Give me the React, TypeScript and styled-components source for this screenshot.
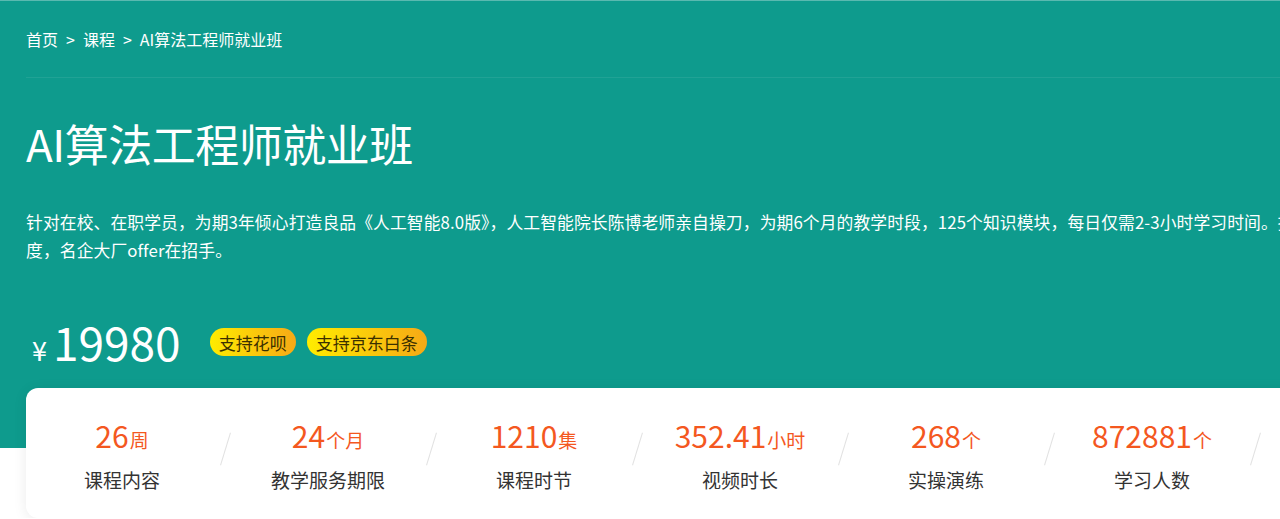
import React from 'react';
import styled, { createGlobalStyle } from 'styled-components';

const GlobalStyle = createGlobalStyle`
  html, body {
    margin: 0;
    padding: 0;
    overflow: hidden;
    background: #fff;
  }
  body {
    font-family: "Microsoft YaHei", "Noto Sans CJK SC", sans-serif;
  }
  * {
    box-sizing: border-box;
  }
`;

interface Stat {
  value: string;
  unit: string;
  label: string;
}

const stats: Stat[] = [
  { value: '26', unit: '周', label: '课程内容' },
  { value: '24', unit: '个月', label: '教学服务期限' },
  { value: '1210', unit: '集', label: '课程时节' },
  { value: '352.41', unit: '小时', label: '视频时长' },
  { value: '268', unit: '个', label: '实操演练' },
  { value: '872881', unit: '个', label: '学习人数' },
  { value: '98', unit: '%', label: '就业率' },
];

const Page = styled.div`
  width: 1480px;
`;

const Hero = styled.section`
  background: #0e9b8d;
  border-top: 1px solid #5ab9b0;
  padding: 0 0 81px 26px;
  color: #fff;
`;

const Breadcrumb = styled.nav`
  height: 77px;
  display: flex;
  align-items: center;
  font-size: 16px;
  border-bottom: 1px solid rgba(255, 255, 255, 0.08);

  span {
    margin: 0 8px;
  }
`;

const Title = styled.h1`
  margin: 39px 0 0;
  font-size: 44px;
  line-height: 53px;
  font-weight: 400;
  letter-spacing: -0.5px;
`;

const Desc = styled.p`
  margin: 38px 0 0;
  width: 1356px;
  font-size: 16.8px;
  line-height: 28px;
  letter-spacing: 0.1px;
`;

const PriceRow = styled.div`
  margin-top: 53px;
  height: 50px;
  display: flex;
  align-items: center;
`;

const Price = styled.div`
  display: flex;
  align-items: baseline;
  margin-left: 6px;
  margin-right: 29px;
`;

const Yen = styled.span`
  font-size: 27px;
  margin-right: 6px;
`;

const Amount = styled.span`
  font-size: 46px;
  line-height: 50px;
`;

const Badge = styled.span`
  height: 28px;
  padding: 0 9px;
  margin-right: 11px;
  border-radius: 14px;
  display: inline-flex;
  align-items: center;
  font-size: 17px;
  color: #3b3000;
  background: linear-gradient(90deg, #ffec00 0%, #f6a916 100%);
`;

const Card = styled.div`
  margin: -60px 0 0 26px;
  width: 1442px;
  height: 130px;
  background: #fff;
  border-radius: 12px;
  box-shadow: 0 2px 14px rgba(0, 0, 0, 0.08);
  display: flex;
  padding-top: 29px;
`;

const StatItem = styled.div`
  width: 192px;
  display: flex;
  flex-direction: column;
  align-items: center;
`;

const Value = styled.div`
  color: #f4581f;
  font-size: 30px;
  line-height: 36px;

  small {
    font-size: 19px;
    margin-left: 1px;
  }
`;

const Label = styled.div`
  margin-top: 9px;
  color: #333;
  font-size: 19px;
  line-height: 26px;
`;

const Divider = styled.div`
  width: 14px;
  height: 60px;
  display: flex;
  justify-content: center;
  padding-top: 15px;

  &::after {
    content: '';
    width: 1px;
    height: 34px;
    background: #e2e2e2;
    transform: rotate(17deg);
  }
`;

const App: React.FC = () => {
  return (
    <Page>
      <GlobalStyle />
      <Hero>
        <Breadcrumb>
          首页<span>&gt;</span>课程<span>&gt;</span>AI算法工程师就业班
        </Breadcrumb>
        <Title>AI算法工程师就业班</Title>
        <Desc>
          针对在校、在职学员，为期3年倾心打造良品《人工智能8.0版》，人工智能院长陈博老师亲自操刀，为期6个月的教学时段，125个知识模块，每日仅需2-3小时学习时间。提升技术广度，名企大厂offer在招手。
        </Desc>
        <PriceRow>
          <Price>
            <Yen>¥</Yen>
            <Amount>19980</Amount>
          </Price>
          <Badge>支持花呗</Badge>
          <Badge>支持京东白条</Badge>
        </PriceRow>
      </Hero>
      <Card>
        {stats.map(stat => (
          <React.Fragment key={stat.label}>
            <StatItem>
              <Value>
                {stat.value}
                <small>{stat.unit}</small>
              </Value>
              <Label>{stat.label}</Label>
            </StatItem>
            <Divider />
          </React.Fragment>
        ))}
      </Card>
    </Page>
  );
};

export default App;
